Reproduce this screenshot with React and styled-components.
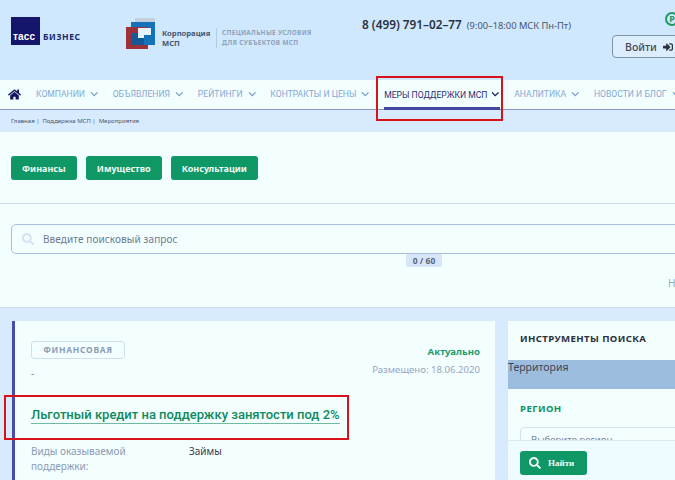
import React from 'react';
import styled, { createGlobalStyle } from 'styled-components';
import { FaHome, FaChevronDown, FaSignInAlt, FaSearch } from 'react-icons/fa';

const Global = createGlobalStyle`
  html, body {
    margin: 0;
    height: 480px;
    overflow: hidden;
    background: #d8ebfe;
  }
  * { box-sizing: border-box; }
`;

const Page = styled.div`
  position: relative;
  width: 675px;
  height: 480px;
  overflow: hidden;
  font-family: "Noto Sans", "Open Sans", sans-serif;
  color: #333a4a;
`;

const Canvas = styled.div`
  width: 800px;
`;

const Header = styled.header`
  display: grid;
  grid-template-columns: 115px 236px 250px 1fr;
  height: 80px;
  padding-left: 11px;
  background: #cfe8fe;
`;

const TassLogo = styled.div`
  display: flex;
  align-items: flex-end;
  gap: 3px;
  height: 45px;
  padding-top: 17px;
`;

const TassMark = styled.div`
  width: 29px;
  height: 28px;
  padding: 0 0 2px 2px;
  display: flex;
  align-items: flex-end;
  background: #14166b;
  color: #fff;
  font: 700 10px/12px "Liberation Sans", sans-serif;
  letter-spacing: 0.2px;
`;

const TassWord = styled.span`
  font: 700 8.5px/12px "Noto Sans", sans-serif;
  color: #1d2a6e;
  letter-spacing: 0.6px;
  padding-bottom: 2px;
`;

const CorpLogo = styled.div`
  display: flex;
  align-items: flex-start;
  padding-top: 18px;
`;

const CorpName = styled.div`
  width: 54px;
  margin: 10px 0 0 4px;
  font-size: 7.6px;
  line-height: 10px;
  font-weight: 700;
  color: #46566f;
`;

const CorpNote = styled.div`
  margin-top: 10px;
  height: 20px;
  padding: 0 0 0 5px;
  border-left: 1px solid #b4cce0;
  font-size: 6.4px;
  line-height: 10px;
  font-weight: 700;
  letter-spacing: 0.35px;
  color: #8fa3ba;
  white-space: nowrap;
`;

const Phone = styled.div`
  display: flex;
  align-items: baseline;
  gap: 5px;
  padding-top: 16px;
  font-size: 11.8px;
  line-height: 17px;
  font-weight: 600;
  color: #2b3240;
  white-space: nowrap;
`;

const Hours = styled.span`
  font-size: 9.3px;
  font-weight: 400;
  color: #4a5568;
`;

const Account = styled.div`
  display: flex;
  flex-direction: column;
  width: 74px;
  padding-top: 12px;
`;

const RoundMark = styled.span`
  align-self: flex-end;
  width: 14px;
  height: 14px;
  margin: 0 7px 9px 0;
  border: 2px solid #1d9a62;
  border-radius: 50%;
  font-size: 9px;
  line-height: 10px;
  font-weight: 700;
  text-align: center;
  color: #1d9a62;
`;

const LoginButton = styled.button`
  display: flex;
  align-items: center;
  gap: 6px;
  width: 74px;
  height: 23px;
  padding: 0 0 0 12px;
  border: 1px solid #7f94a6;
  border-radius: 4px;
  background: #dcedfd;
  font: 500 10.6px "Noto Sans", sans-serif;
  color: #3f4855;
  svg { font-size: 10px; color: #2a3240; }
`;

const Nav = styled.nav`
  display: flex;
  align-items: stretch;
  height: 30px;
  padding-left: 8px;
  background: #f3feff;
  border-bottom: 1px solid #8b96bc;
  font-family: Roboto, sans-serif;
`;

const HomeLink = styled.a`
  display: flex;
  align-items: center;
  width: 28px;
  font-size: 13px;
  color: #14185e;
`;

const NavItem = styled.a`
  display: flex;
  align-items: center;
  gap: ${p => (p.$active ? 4 : 5)}px;
  height: 30px;
  margin-right: 14.25px;
  padding-top: ${p => (p.$active ? 2 : 1)}px;
  font-size: 8.6px;
  white-space: nowrap;
  color: ${p => (p.$active ? '#2a2f78' : '#85a8d2')};
  border-bottom: 3px solid ${p => (p.$active ? '#44479f' : 'transparent')};
  svg { font-size: 8.5px; color: ${p => (p.$active ? '#14185e' : '#7ba0cc')}; }
`;

const Crumbs = styled.div`
  display: flex;
  align-items: center;
  gap: 3px;
  height: 22px;
  padding-left: 11px;
  background: #d8ebfe;
  font-size: 6px;
  color: #4a5568;
`;

const Filters = styled.div`
  display: flex;
  gap: 9px;
  height: 72px;
  padding: 24px 0 0 11px;
  background: #f3feff;
  border-bottom: 1px solid #cfdcee;
`;

const FilterButton = styled.button`
  height: 24px;
  padding: 0 11px;
  border: 0;
  border-radius: 3px;
  background: #0f9766;
  font: 700 9px "Noto Sans", sans-serif;
  color: #eefaf5;
`;

const SearchBlock = styled.div`
  height: 104px;
  padding: 20px 0 0 11px;
  background: #f3feff;
  border-bottom: 1px solid #cfdcee;
`;

const SearchField = styled.div`
  display: flex;
  align-items: center;
  gap: 9px;
  width: 780px;
  height: 30px;
  padding-left: 10px;
  border: 1px solid #a9c0dd;
  border-radius: 5px;
  font-size: 10px;
  letter-spacing: 0.1px;
  color: #6d7a8e;
  svg { color: #d0e2f3; flex: none; }
`;

const CounterRow = styled.div`
  display: flex;
  padding-left: 395px;
`;

const Counter = styled.span`
  display: block;
  width: 36px;
  height: 13px;
  border-radius: 2px;
  background: #d6e5f8;
  font-size: 8.5px;
  line-height: 13px;
  font-weight: 700;
  text-align: center;
  color: #5b6678;
`;

const Found = styled.div`
  margin-top: 9px;
  padding-left: 657px;
  font-size: 10px;
  line-height: 14px;
  color: #9aa9bc;
  white-space: nowrap;
`;

const Columns = styled.div`
  display: flex;
  gap: 13px;
  padding: 13px 0 0 12px;
  background: #d8ebfe;
`;

const Card = styled.article`
  width: 483px;
  height: 200px;
  padding: 20px 15px 0 16px;
  background: #f3feff;
  border-left: 3px solid #4a4cae;
`;

const CardTop = styled.div`
  display: flex;
  justify-content: space-between;
`;

const Tag = styled.span`
  display: block;
  width: 94px;
  height: 18px;
  border: 1px solid #cfdff0;
  border-radius: 3px;
  font-size: 8.5px;
  line-height: 16px;
  font-weight: 700;
  letter-spacing: 0.7px;
  text-align: center;
  color: #8c9db5;
`;

const Dash = styled.div`
  margin-top: 7px;
  font-size: 10px;
  line-height: 14px;
  color: #7e8794;
`;

const Status = styled.div`
  text-align: right;
  padding-top: 4px;
`;

const StatusLabel = styled.div`
  font-size: 9.6px;
  line-height: 14px;
  font-weight: 700;
  color: #1f9d6d;
`;

const Posted = styled.div`
  margin-top: 4px;
  font-size: 9.6px;
  line-height: 14px;
  color: #97a5c0;
`;

const Title = styled.a`
  display: inline-block;
  margin-top: 26px;
  border-bottom: 1px solid #70bb9f;
  font-family: Roboto, sans-serif;
  font-size: 13px;
  line-height: 17px;
  font-weight: 500;
  color: #0f8a5d;
  white-space: nowrap;
`;

const Detail = styled.div`
  display: grid;
  grid-template-columns: 158px 1fr;
  margin-top: 20px;
  font-size: 10px;
  line-height: 15px;
`;

const DetailLabel = styled.span`
  width: 110px;
  color: #8c9bb2;
`;

const DetailValue = styled.span`
  color: #3a4050;
`;

const Sidebar = styled.aside`
  width: 290px;
  height: 200px;
  background: #f3feff;
`;

const SidebarTitle = styled.h3`
  height: 39px;
  margin: 0;
  padding: 11px 0 0 12px;
  font-size: 9.6px;
  line-height: 14px;
  font-weight: 700;
  letter-spacing: 0.4px;
  color: #2b3240;
`;

const GroupHead = styled.div`
  height: 29px;
  background: #9dbddf;
  font-size: 10.5px;
  line-height: 14px;
  color: #3d4658;
`;

const RegionLabel = styled.div`
  margin: 13px 0 11px 12px;
  font-size: 9.6px;
  line-height: 14px;
  font-weight: 700;
  letter-spacing: 0.4px;
  color: #109465;
`;

const RegionSelect = styled.div`
  width: 220px;
  height: 30px;
  margin-left: 12px;
  padding: 5px 0 0 10px;
  border: 1px solid #d3e0ee;
  border-radius: 4px;
  font-size: 9.6px;
  color: #77849a;
`;

const FloatingBar = styled.div`
  position: absolute;
  left: 508px;
  top: 440px;
  width: 167px;
  height: 40px;
  padding: 10px 0 0 12px;
  background: #eefbff;
  border-top: 1px solid #dbe9f5;
`;

const FindButton = styled.button`
  display: flex;
  align-items: center;
  gap: 7px;
  width: 67px;
  height: 24px;
  padding: 0 0 0 9px;
  border: 0;
  border-radius: 3px;
  background: #0f9766;
  font: 700 9px "Liberation Serif", serif;
  color: #eefaf5;
  svg { font-size: 12px; }
`;

const Annotation = styled.div`
  position: absolute;
  left: ${p => p.$x}px;
  top: ${p => p.$y}px;
  width: ${p => p.$w}px;
  height: ${p => p.$h}px;
  border: 2px solid #d8121a;
`;

const CorpMark = () => (
  <svg width="32" height="31" viewBox="0 0 32 31">
    <rect x="9" y="0" width="20" height="24" fill="#c2cfdf" />
    <rect x="5" y="4" width="24" height="23" fill="#1672b8" />
    <rect x="0" y="9" width="22" height="22" fill="#9c3238" />
    <rect x="5" y="15" width="13" height="12" fill="#135a96" />
    <path d="M12 10h13v7h-7v3h-6z" fill="#e8f2fb" />
    <path d="M18 17h11v10h-11z" fill="#1672b8" />
  </svg>
);

const navItems = ['КОМПАНИИ', 'ОБЪЯВЛЕНИЯ', 'РЕЙТИНГИ', 'КОНТРАКТЫ И ЦЕНЫ', 'МЕРЫ ПОДДЕРЖКИ МСП', 'АНАЛИТИКА', 'НОВОСТИ И БЛОГ'];
const filters = ['Финансы', 'Имущество', 'Консультации'];

export default function App() {
  return (
    <Page>
      <Global />
      <Canvas>
        <Header>
          <TassLogo>
            <TassMark>тасс</TassMark>
            <TassWord>БИЗНЕС</TassWord>
          </TassLogo>
          <CorpLogo>
            <CorpMark />
            <CorpName>Корпорация МСП</CorpName>
            <CorpNote>СПЕЦИАЛЬНЫЕ УСЛОВИЯ<br />ДЛЯ СУБЪЕКТОВ МСП</CorpNote>
          </CorpLogo>
          <Phone>
            8 (499) 791–02–77 <Hours>(9:00–18:00 МСК Пн-Пт)</Hours>
          </Phone>
          <Account>
            <RoundMark>Р</RoundMark>
            <LoginButton>Войти <FaSignInAlt /></LoginButton>
          </Account>
        </Header>
        <Nav>
          <HomeLink><FaHome /></HomeLink>
          {navItems.map(item => (
            <NavItem key={item} $active={item === 'МЕРЫ ПОДДЕРЖКИ МСП'}>
              {item} <FaChevronDown />
            </NavItem>
          ))}
        </Nav>
        <Crumbs>
          <span>Главная |</span>
          <span>Поддержка МСП |</span>
          <span>Мероприятия</span>
        </Crumbs>
        <Filters>
          {filters.map(f => <FilterButton key={f}>{f}</FilterButton>)}
        </Filters>
        <SearchBlock>
          <SearchField>
            <FaSearch size={12} />
            Введите поисковый запрос
          </SearchField>
          <CounterRow><Counter>0 / 60</Counter></CounterRow>
          <Found>Найдено</Found>
        </SearchBlock>
        <Columns>
          <Card>
            <CardTop>
              <div>
                <Tag>ФИНАНСОВАЯ</Tag>
                <Dash>-</Dash>
              </div>
              <Status>
                <StatusLabel>Актуально</StatusLabel>
                <Posted>Размещено: 18.06.2020</Posted>
              </Status>
            </CardTop>
            <Title>Льготный кредит на поддержку занятости под 2%</Title>
            <Detail>
              <DetailLabel>Виды оказываемой поддержки:</DetailLabel>
              <DetailValue>Займы</DetailValue>
            </Detail>
          </Card>
          <Sidebar>
            <SidebarTitle>ИНСТРУМЕНТЫ ПОИСКА</SidebarTitle>
            <GroupHead>Территория</GroupHead>
            <RegionLabel>РЕГИОН</RegionLabel>
            <RegionSelect>Выберите регион</RegionSelect>
          </Sidebar>
        </Columns>
      </Canvas>
      <FloatingBar>
        <FindButton><FaSearch /> Найти</FindButton>
      </FloatingBar>
      <Annotation $x={376} $y={76} $w={127} $h={45} />
      <Annotation $x={4} $y={395} $w={345} $h={45} />
    </Page>
  );
}
